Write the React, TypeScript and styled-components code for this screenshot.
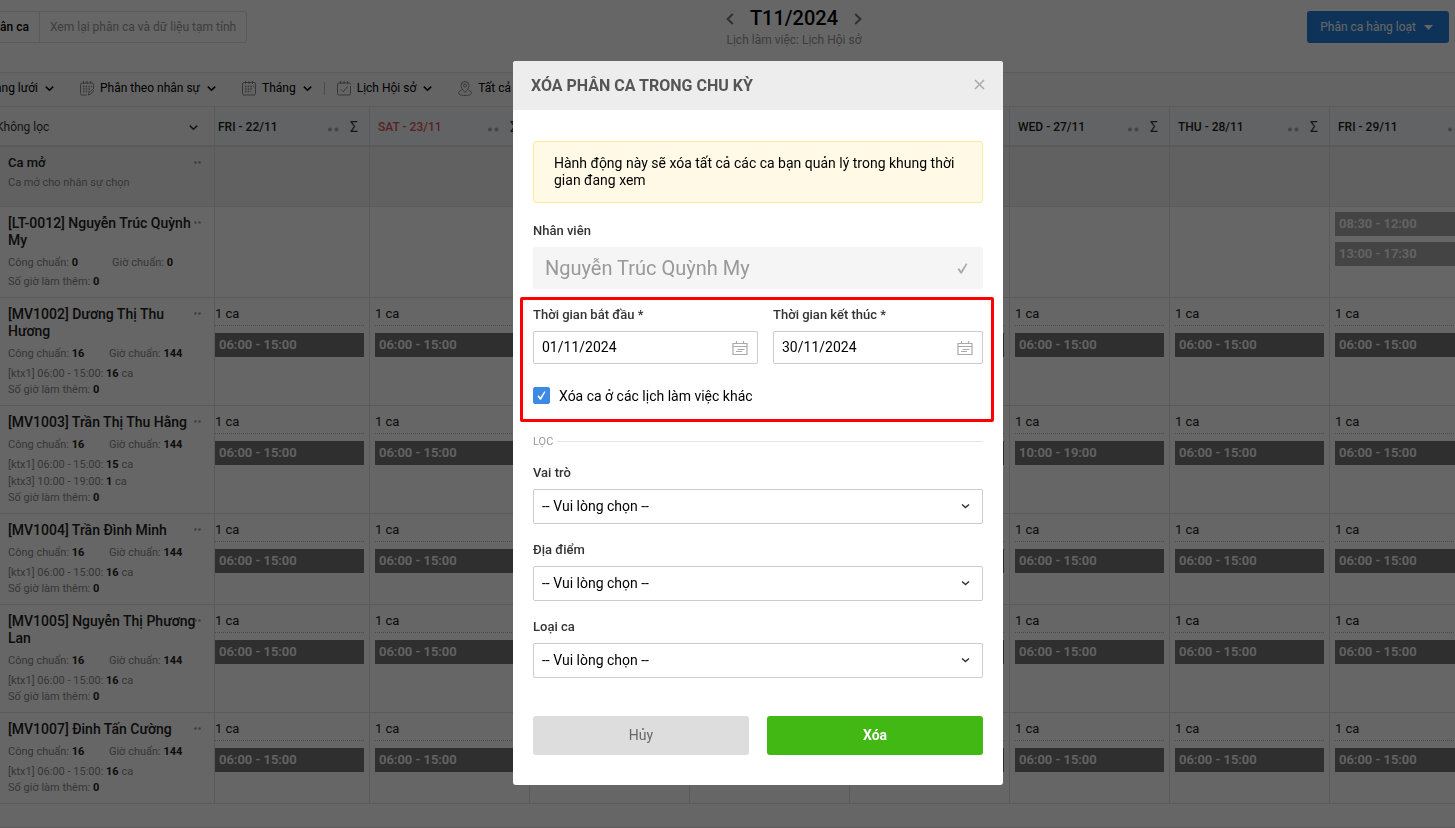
import React, { useState } from 'react';
import styled, { createGlobalStyle } from 'styled-components';

const GlobalStyle = createGlobalStyle`
  *, *::before, *::after { box-sizing: border-box; }
  body {
    margin: 0;
    background: #fff;
    color: #111;
    font-family: Roboto, "Liberation Sans", sans-serif;
    font-size: 13px;
    line-height: 17px;
  }
  button, input, select { font: inherit; color: inherit; }
  button { border: 0; padding: 0; background: none; cursor: pointer; }
  svg { flex: none; }
`;

/* ---------- page ---------- */

const Page = styled.div`
  min-height: 100vh;
  overflow: hidden;
  border-bottom: 1px solid #e6e6e6;
`;

const TopBar = styled.header`
  display: grid;
  grid-template-columns: 1fr auto 1fr;
  align-items: start;
  height: 72px;
  font-size: 12px;
`;

const Tabs = styled.nav`
  display: flex;
  justify-self: start;
  height: 32px;
  margin-top: 11px;
  border: 1px solid #e0e0e0;
  border-left: 0;
  border-radius: 0 3px 3px 0;
`;

const Tab = styled.button<{ $active?: boolean }>`
  display: flex;
  justify-content: flex-end;
  align-items: center;
  padding: 0 10px;
  white-space: nowrap;
  color: ${p => (p.$active ? '#000' : '#999')};
  font-weight: ${p => (p.$active ? 500 : 400)};
  width: ${p => (p.$active ? '40px' : 'auto')};
  border-right: ${p => (p.$active ? '1px solid #e0e0e0' : '0')};
  overflow: hidden;
`;

const Period = styled.div`
  margin-left: 133px;
  padding-top: 8px;
  text-align: center;
`;

const PeriodRow = styled.div`
  display: flex;
  align-items: center;
  justify-content: space-between;
  height: 21px;
  color: #777;
  button { display: flex; }
`;

const PeriodTitle = styled.h1`
  margin: 0;
  color: #000;
  font-size: 20px;
  font-weight: 500;
  line-height: 21px;
`;

const PeriodNote = styled.div`
  color: #999;
  line-height: 22px;
`;

const BulkButton = styled.button`
  justify-self: end;
  display: flex;
  align-items: center;
  gap: 8px;
  height: 32px;
  margin: 11px 6px 0 0;
  padding: 0 16px 0 13px;
  border-radius: 3px;
  background: #267fdc;
  color: #fff;
`;

const Toolbar = styled.div`
  display: flex;
  align-items: center;
  gap: 26px;
  height: 35px;
  padding-bottom: 3px;
  border: 1px solid #e6e6e6;
  border-width: 1px 0;
  background: #fafafa;
  font-size: 12px;
  white-space: nowrap;
`;

const ToolGroup = styled.div`
  display: flex;
  align-items: center;
  gap: 12px;
`;

const ToolItem = styled.button<{ $cut?: boolean }>`
  display: flex;
  align-items: center;
  justify-content: flex-end;
  gap: 6px;
  color: #000;
  width: ${p => (p.$cut ? '54px' : 'auto')};
  svg:last-child { margin-left: 1px; }
`;

const Divider = styled.i`
  width: 1px;
  height: 13px;
  background: #bbb;
`;

/* ---------- roster ---------- */

const Roster = styled.table`
  width: 100%;
  min-width: 1490px;
  border-collapse: separate;
  border-spacing: 0;
  table-layout: fixed;
`;

const HeadCell = styled.th<{ $weekend?: boolean }>`
  width: 160px;
  height: 40px;
  padding: 3px 11px 0 8px;
  border-right: 1px solid #e0e0e0;
  border-bottom: 2px solid #e0e0e0;
  background: #f5f7f9;
  color: ${p => (p.$weekend ? '#e05555' : '#222')};
  font-size: 12px;
  font-weight: 500;
  text-align: left;
  &:nth-child(2) { width: 155px; padding-left: 3px; }
`;

const HeadInner = styled.div`
  display: flex;
  align-items: center;
  justify-content: space-between;
`;

const HeadTools = styled.span`
  display: flex;
  align-items: center;
  gap: 11px;
  color: #333;
  font-size: 14px;
  font-weight: 400;
`;

const FilterHead = styled.th`
  width: 215px;
  height: 40px;
  padding: 3px 16px 0 0;
  border-right: 1px solid #e0e0e0;
  border-bottom: 2px solid #e0e0e0;
  background: #fafafa;
  font-weight: 400;
`;

const FilterWrap = styled.div`
  display: flex;
  align-items: center;
  color: #333;
  margin-left: -4px;
`;

const FilterSelect = styled.select`
  flex: 1;
  padding: 0;
  border: 0;
  background: none;
  appearance: none;
  font-size: 12px;
`;

const Row = styled.tr<{ $open?: boolean }>`
  background: ${p => (p.$open ? '#f3f3f3' : '#fff')};
`;

const PersonCell = styled.th<{ $open?: boolean }>`
  position: relative;
  height: ${p => (p.$open ? '60px' : 'auto')};
  padding: ${p => (p.$open ? '7px' : '8px')} 7px 7px 8px;
  border-right: 1px solid #e0e0e0;
  border-bottom: 1px solid #e0e0e0;
  text-align: left;
  vertical-align: top;
  color: #888;
  font-size: 11px;
  font-weight: 400;
  line-height: 16px;
`;

const Name = styled.div`
  margin-bottom: 6px;
  color: #222;
  font-size: 14px;
  font-weight: 500;
  line-height: 17px;
`;

const OpenName = styled(Name)`
  margin-bottom: 4px;
  font-size: 13px;
`;

const Totals = styled.div`
  display: flex;
  margin-bottom: 3px;
  span { flex: 1 1 auto; }
`;

const ShiftTotal = styled.div`
  line-height: 17px;
`;

const Strong = styled.b`
  color: #222;
  font-weight: 700;
`;

const MoreButton = styled.button`
  position: absolute;
  top: 11px;
  right: 13px;
  display: flex;
  color: #999;
`;

const DayCell = styled.td`
  padding: 5px;
  border-right: 1px solid #e0e0e0;
  border-bottom: 1px solid #e0e0e0;
  vertical-align: top;
  &:nth-child(2) { padding-left: 0; }
`;

const Count = styled.div`
  height: 23px;
  margin-bottom: 7px;
  border-bottom: 1px dotted #bbb;
  color: #222;
  line-height: 22px;
`;

const Chip = styled.div<{ $light?: boolean }>`
  height: 24px;
  padding: 0 4px;
  background: ${p => (p.$light ? '#aaa' : '#777')};
  color: #f8f8f8;
  font-weight: 600;
  line-height: 24px;
  white-space: nowrap;
  & + & { margin-top: 6px; }
`;

/* ---------- dialog ---------- */

const Overlay = styled.div`
  position: fixed;
  inset: 0;
  display: flex;
  align-items: flex-start;
  justify-content: center;
  padding: 61px 0 0 61px;
  background: rgba(0, 0, 0, 0.6);
  overflow: auto;
`;

const Dialog = styled.form`
  width: 490px;
  border-radius: 3px;
  background: #fff;
  color: #000;
  font-size: 14px;
  overflow: hidden;
`;

const DialogHead = styled.div`
  display: flex;
  align-items: center;
  justify-content: space-between;
  height: 49px;
  padding: 0 18px;
  background: #ededed;
`;

const DialogTitle = styled.h2`
  margin: 0;
  color: #555;
  font-size: 16px;
  font-weight: 700;
  line-height: 20px;
`;

const CloseButton = styled.button`
  display: flex;
  padding-bottom: 3px;
  color: #aaa;
`;

const DialogBody = styled.div`
  padding: 31px 20px 30px;
`;

const Notice = styled.p`
  margin: 0 0 19px;
  padding: 13px 20px;
  border: 1px solid #ffeb9c;
  border-radius: 3px;
  background: #fff9e5;
`;

const Field = styled.div`
  margin-bottom: 17px;
`;

const Label = styled.label`
  display: block;
  margin-bottom: 8px;
  color: #333;
  font-size: 13px;
  font-weight: 500;
`;

const Control = styled.div<{ $tone: string; $end: number }>`
  position: relative;
  display: flex;
  align-items: center;
  svg {
    position: absolute;
    right: ${p => p.$end}px;
    color: ${p => p.$tone};
    pointer-events: none;
  }
`;

const PersonInput = styled.input`
  width: 100%;
  height: 42px;
  padding: 0 12px;
  border: 0;
  border-radius: 3px;
  background: #f5f5f5;
  color: #999;
  font-size: 20px;
`;

const DateInput = styled.input`
  width: 100%;
  height: 33px;
  padding: 0 8px 1px;
  border: 1px solid #ccc;
  border-radius: 2px;
  background: #fff;
`;

const Select = styled.select`
  width: 100%;
  height: 35px;
  padding: 0 8px;
  border: 1px solid #ccc;
  border-radius: 2px;
  background: #fff;
  appearance: none;
`;

const Highlighted = styled.div`
  position: relative;
  &::after {
    content: '';
    position: absolute;
    inset: -9px -11px -17px -13px;
    border: 3px solid #f00;
    border-radius: 2px;
    pointer-events: none;
  }
`;

const Dates = styled.div`
  display: grid;
  grid-template-columns: 1fr 210px;
  gap: 15px;
  margin-bottom: 23px;
`;

const CheckLabel = styled.label`
  display: flex;
  align-items: flex-start;
  gap: 9px;
  line-height: 18px;
`;

const CheckBox = styled.span`
  position: relative;
  display: flex;
  color: #fff;
  svg { position: absolute; top: 4px; left: 4px; pointer-events: none; }
`;

const CheckInput = styled.input`
  width: 17px;
  height: 17px;
  margin: 0;
  border: 1px solid #3c8ae3;
  border-radius: 2px;
  background: #fff;
  appearance: none;
  &:checked { background: #3c8ae3; }
`;

const Section = styled.div`
  display: flex;
  align-items: center;
  gap: 4px;
  margin: 28px 0 14px;
  color: #999;
  font-size: 11px;
  &::after { content: ''; flex: 1; height: 1px; background: #e3e3e3; }
`;

const Actions = styled.div`
  display: grid;
  grid-template-columns: 1fr 1fr;
  gap: 18px;
  margin-top: 38px;
`;

const Action = styled.button<{ $primary?: boolean }>`
  height: 39px;
  border-radius: 3px;
  background: ${p => (p.$primary ? '#41b814' : '#ddd')};
  color: ${p => (p.$primary ? '#fff' : '#666')};
  font-weight: ${p => (p.$primary ? 700 : 400)};
`;

/* ---------- icons ---------- */

const Chevron = ({ small }: { small?: boolean }) => (
  <svg width="9" height="9" viewBox="0 0 9 9" fill="none" stroke="currentColor" strokeWidth="1.5">
    <path d={small ? 'M1 2.500 4.500 5.500 8 2.500' : 'M0.8 2.6 4.5 6.3 8.2 2.6'} />
  </svg>
);

const SideArrow = ({ next }: { next?: boolean }) => (
  <svg width="8" height="12" viewBox="0 0 8 12" fill="none" stroke="currentColor" strokeWidth="2">
    <path d={next ? 'M1.2 1 6.4 6 1.2 11' : 'M6.8 1 1.6 6 6.8 11'} />
  </svg>
);

const Caret = () => (
  <svg width="9" height="5" viewBox="0 0 9 5" fill="currentColor">
    <path d="M0 0h9L4.500 5z" />
  </svg>
);

const Dots = ({ large }: { large?: boolean }) =>
  large ? (
    <svg width="11" height="9" viewBox="0 0 11 9" fill="#aaa">
      <circle cx="2" cy="6.500" r="2" />
      <circle cx="8.500" cy="6.500" r="2" />
    </svg>
  ) : (
    <svg width="7" height="9" viewBox="0 0 7 9" fill="currentColor">
      <circle cx="1.500" cy="4.500" r="1.300" />
      <circle cx="5.500" cy="4.500" r="1.300" />
    </svg>
  );

const Tick = ({ size = 11 }: { size?: number }) => (
  <svg width={size} height={size} viewBox="0 0 11 11" fill="currentColor">
    <path d="M0.500 6.300 2.200 5.300 4.100 8 9 0.300 10.400 0.900 4.900 10.600 3.500 10.600z" />
  </svg>
);

const Cross = () => (
  <svg width="11" height="11" viewBox="0 0 11 11" fill="none" stroke="currentColor" strokeWidth="1.5">
    <path d="M1 1 10 10M10 1 1 10" />
  </svg>
);

const DateIcon = () => (
  <svg width="16" height="15" viewBox="0 0 16 15" fill="none" stroke="currentColor">
    <path d="M1 3.500h14v11h-14zM1 6.500h14M4.500 1v3M11.500 1v3M5.500 9.500h7M4 11.500h6" strokeWidth="1.200" />
  </svg>
);

const CalendarIcon = ({ kind }: { kind: 'edit' | 'grid' | 'check' }) => (
  <svg width="14" height="15" viewBox="0 0 14 15" fill="none" stroke="#888">
    {kind === 'grid' && <path d="M2 1.500h10a1.500 1.500 0 0 1 1.500 1.500v9.500a1.500 1.500 0 0 1-1.500 1.500H2A1.500 1.500 0 0 1 .5 12.500V3A1.500 1.500 0 0 1 2 1.500z" />}
    {kind === 'edit' && <path d="M7 14H2A1.500 1.500 0 0 1 .5 12.500V3.500A1.500 1.500 0 0 1 2 2h10a1.500 1.500 0 0 1 1.500 1.500V8M8.500 14l.5-2.500 3.500-3 1.200 1.300-3.200 3.400z" />}
    {kind === 'check' && <path d="M13.500 5v7.500A1.500 1.500 0 0 1 12 14H2A1.500 1.500 0 0 1 .5 12.500V3.500A1.500 1.500 0 0 1 2 2h10a1.500 1.500 0 0 1 1.500 1.500M4 8.500l2.300 2.300L10.500 5.500" />}
    <path d="M3.500 0v3M7 0v3M10.500 0v3" />
    {kind !== 'check' && <path d="M3 5.500h9M3 8h8M3 10.500h6" strokeWidth="1.500" strokeDasharray="1.500 1.200" />}
  </svg>
);

const PinIcon = () => (
  <svg width="14" height="15" viewBox="0 0 14 15" fill="none" stroke="#888">
    <path d="M7 11.500C4.500 8.500 3 6.800 3 4.500a4 4 0 0 1 8 0c0 2.300-1.500 4-4 7z" />
    <circle cx="7" cy="4.500" r="1.500" />
    <path d="M3.500 9C1.500 10 .5 11 .5 12c0 1.500 2.500 2.500 6.500 2.500s6.500-1 6.500-2.500c0-1-1-2-3-3" />
  </svg>
);

/* ---------- data ---------- */

const days = ['FRI - 22/11', 'SAT - 23/11', 'SUN - 24/11', 'MON - 25/11', 'TUE - 26/11', 'WED - 27/11', 'THU - 28/11', 'FRI - 29/11'];

interface Person {
  name: string;
  units: number;
  hours: number;
  shifts: { label: string; count: number }[];
  exceptDay?: { index: number; time: string };
}

const usual = '06:00 - 15:00';

const people: Person[] = [
  { name: '[LT-0012] Nguyễn Trúc Quỳnh My', units: 0, hours: 0, shifts: [] },
  { name: '[MV1002] Dương Thị Thu Hương', units: 16, hours: 144, shifts: [{ label: '[ktx1] 06:00 - 15:00:', count: 16 }] },
  {
    name: '[MV1003] Trần Thị Thu Hằng', units: 16, hours: 144,
    shifts: [{ label: '[ktx1] 06:00 - 15:00:', count: 15 }, { label: '[ktx3] 10:00 - 19:00:', count: 1 }],
    exceptDay: { index: 5, time: '10:00 - 19:00' },
  },
  { name: '[MV1004] Trần Đình Minh', units: 16, hours: 144, shifts: [{ label: '[ktx1] 06:00 - 15:00:', count: 16 }] },
  { name: '[MV1005] Nguyễn Thị Phương Lan', units: 16, hours: 144, shifts: [{ label: '[ktx1] 06:00 - 15:00:', count: 16 }] },
  { name: '[MV1007] Đinh Tấn Cường', units: 16, hours: 144, shifts: [{ label: '[ktx1] 06:00 - 15:00:', count: 16 }] },
];

const filters = [
  { id: 'role', label: 'Vai trò' },
  { id: 'place', label: 'Địa điểm' },
  { id: 'kind', label: 'Loại ca' },
];

function PersonRow({ person }: { person: Person }) {
  return (
    <Row>
      <PersonCell scope="row">
        <Name>{person.name}</Name>
        <MoreButton type="button" aria-label="Thêm"><Dots /></MoreButton>
        <Totals>
          <span>Công chuẩn: <Strong>{person.units}</Strong></span>
          <span>Giờ chuẩn: <Strong>{person.hours}</Strong></span>
        </Totals>
        {person.shifts.map(s => (
          <ShiftTotal key={s.label}>{s.label} <Strong>{s.count}</Strong> ca</ShiftTotal>
        ))}
        <div>Số giờ làm thêm: <Strong>0</Strong></div>
      </PersonCell>
      {days.map((day, i) => (
        <DayCell key={day}>
          {person.shifts.length > 0 && (
            <>
              <Count>1 ca</Count>
              <Chip>{person.exceptDay?.index === i ? person.exceptDay.time : usual}</Chip>
            </>
          )}
          {person.shifts.length === 0 && i === 7 && (
            <>
              <Chip $light>08:30 - 12:00</Chip>
              <Chip $light>13:00 - 17:30</Chip>
            </>
          )}
        </DayCell>
      ))}
    </Row>
  );
}

function DeleteDialog() {
  const [start, setStart] = useState('01/11/2024');
  const [end, setEnd] = useState('30/11/2024');
  const [others, setOthers] = useState(true);
  return (
    <Overlay>
      <Dialog role="dialog" aria-modal="true" aria-labelledby="dialog-title" onSubmit={e => e.preventDefault()}>
        <DialogHead>
          <DialogTitle id="dialog-title">XÓA PHÂN CA TRONG CHU KỲ</DialogTitle>
          <CloseButton type="button" aria-label="Đóng"><Cross /></CloseButton>
        </DialogHead>
        <DialogBody>
          <Notice>Hành động này sẽ xóa tất cả các ca bạn quản lý trong khung thời gian đang xem</Notice>
          <Field>
            <Label htmlFor="person">Nhân viên</Label>
            <Control $tone="#aaa" $end={15}>
              <PersonInput id="person" value="Nguyễn Trúc Quỳnh My" readOnly />
              <Tick />
            </Control>
          </Field>
          <Highlighted>
            <Dates>
              <div>
                <Label htmlFor="start">Thời gian bắt đầu *</Label>
                <Control $tone="#aaa" $end={10}>
                  <DateInput id="start" value={start} onChange={e => setStart(e.target.value)} />
                  <DateIcon />
                </Control>
              </div>
              <div>
                <Label htmlFor="end">Thời gian kết thúc *</Label>
                <Control $tone="#aaa" $end={10}>
                  <DateInput id="end" value={end} onChange={e => setEnd(e.target.value)} />
                  <DateIcon />
                </Control>
              </div>
            </Dates>
            <CheckLabel>
              <CheckBox>
                <CheckInput type="checkbox" checked={others} onChange={e => setOthers(e.target.checked)} />
                <Tick size={9} />
              </CheckBox>
              Xóa ca ở các lịch làm việc khác
            </CheckLabel>
          </Highlighted>
          <Section>LỌC</Section>
          {filters.map(f => (
            <Field key={f.id}>
              <Label htmlFor={f.id}>{f.label}</Label>
              <Control $tone="#333" $end={13}>
                <Select id={f.id}><option>-- Vui lòng chọn --</option></Select>
                <Chevron small />
              </Control>
            </Field>
          ))}
          <Actions>
            <Action type="button">Hủy</Action>
            <Action type="submit" $primary>Xóa</Action>
          </Actions>
        </DialogBody>
      </Dialog>
    </Overlay>
  );
}

export default function App() {
  return (
    <>
      <GlobalStyle />
      <Page>
        <TopBar>
          <Tabs>
            <Tab type="button" $active>Phân ca</Tab>
            <Tab type="button">Xem lại phân ca và dữ liệu tạm tính</Tab>
          </Tabs>
          <Period>
            <PeriodRow>
              <button type="button" aria-label="Tháng trước"><SideArrow /></button>
              <PeriodTitle>T11/2024</PeriodTitle>
              <button type="button" aria-label="Tháng sau"><SideArrow next /></button>
            </PeriodRow>
            <PeriodNote>Lịch làm việc: Lịch Hội sở</PeriodNote>
          </Period>
          <BulkButton type="button">Phân ca hàng loạt <Caret /></BulkButton>
        </TopBar>
        <Toolbar>
          <ToolItem type="button" $cut>Dạng lưới <Chevron /></ToolItem>
          <ToolItem type="button"><CalendarIcon kind="edit" />Phân theo nhân sự <Chevron /></ToolItem>
          <ToolGroup>
            <ToolItem type="button"><CalendarIcon kind="grid" />Tháng <Chevron /></ToolItem>
            <Divider />
            <ToolItem type="button"><CalendarIcon kind="check" />Lịch Hội sở <Chevron /></ToolItem>
          </ToolGroup>
          <ToolItem type="button"><PinIcon />Tất cả <Chevron /></ToolItem>
        </Toolbar>
        <Roster>
          <thead>
            <tr>
              <FilterHead scope="col">
                <FilterWrap>
                  <FilterSelect aria-label="Lọc"><option>Không lọc</option></FilterSelect>
                  <Chevron />
                </FilterWrap>
              </FilterHead>
              {days.map(day => (
                <HeadCell key={day} scope="col" $weekend={day.startsWith('S')}>
                  <HeadInner>
                    {day}
                    <HeadTools><Dots large />Σ</HeadTools>
                  </HeadInner>
                </HeadCell>
              ))}
            </tr>
          </thead>
          <tbody>
            <Row $open>
              <PersonCell scope="row" $open>
                <OpenName>Ca mở</OpenName>
                <MoreButton type="button" aria-label="Thêm"><Dots /></MoreButton>
                Ca mở cho nhân sự chọn
              </PersonCell>
              {days.map(day => <DayCell key={day} />)}
            </Row>
            {people.map(p => <PersonRow key={p.name} person={p} />)}
          </tbody>
        </Roster>
      </Page>
      <DeleteDialog />
    </>
  );
}
